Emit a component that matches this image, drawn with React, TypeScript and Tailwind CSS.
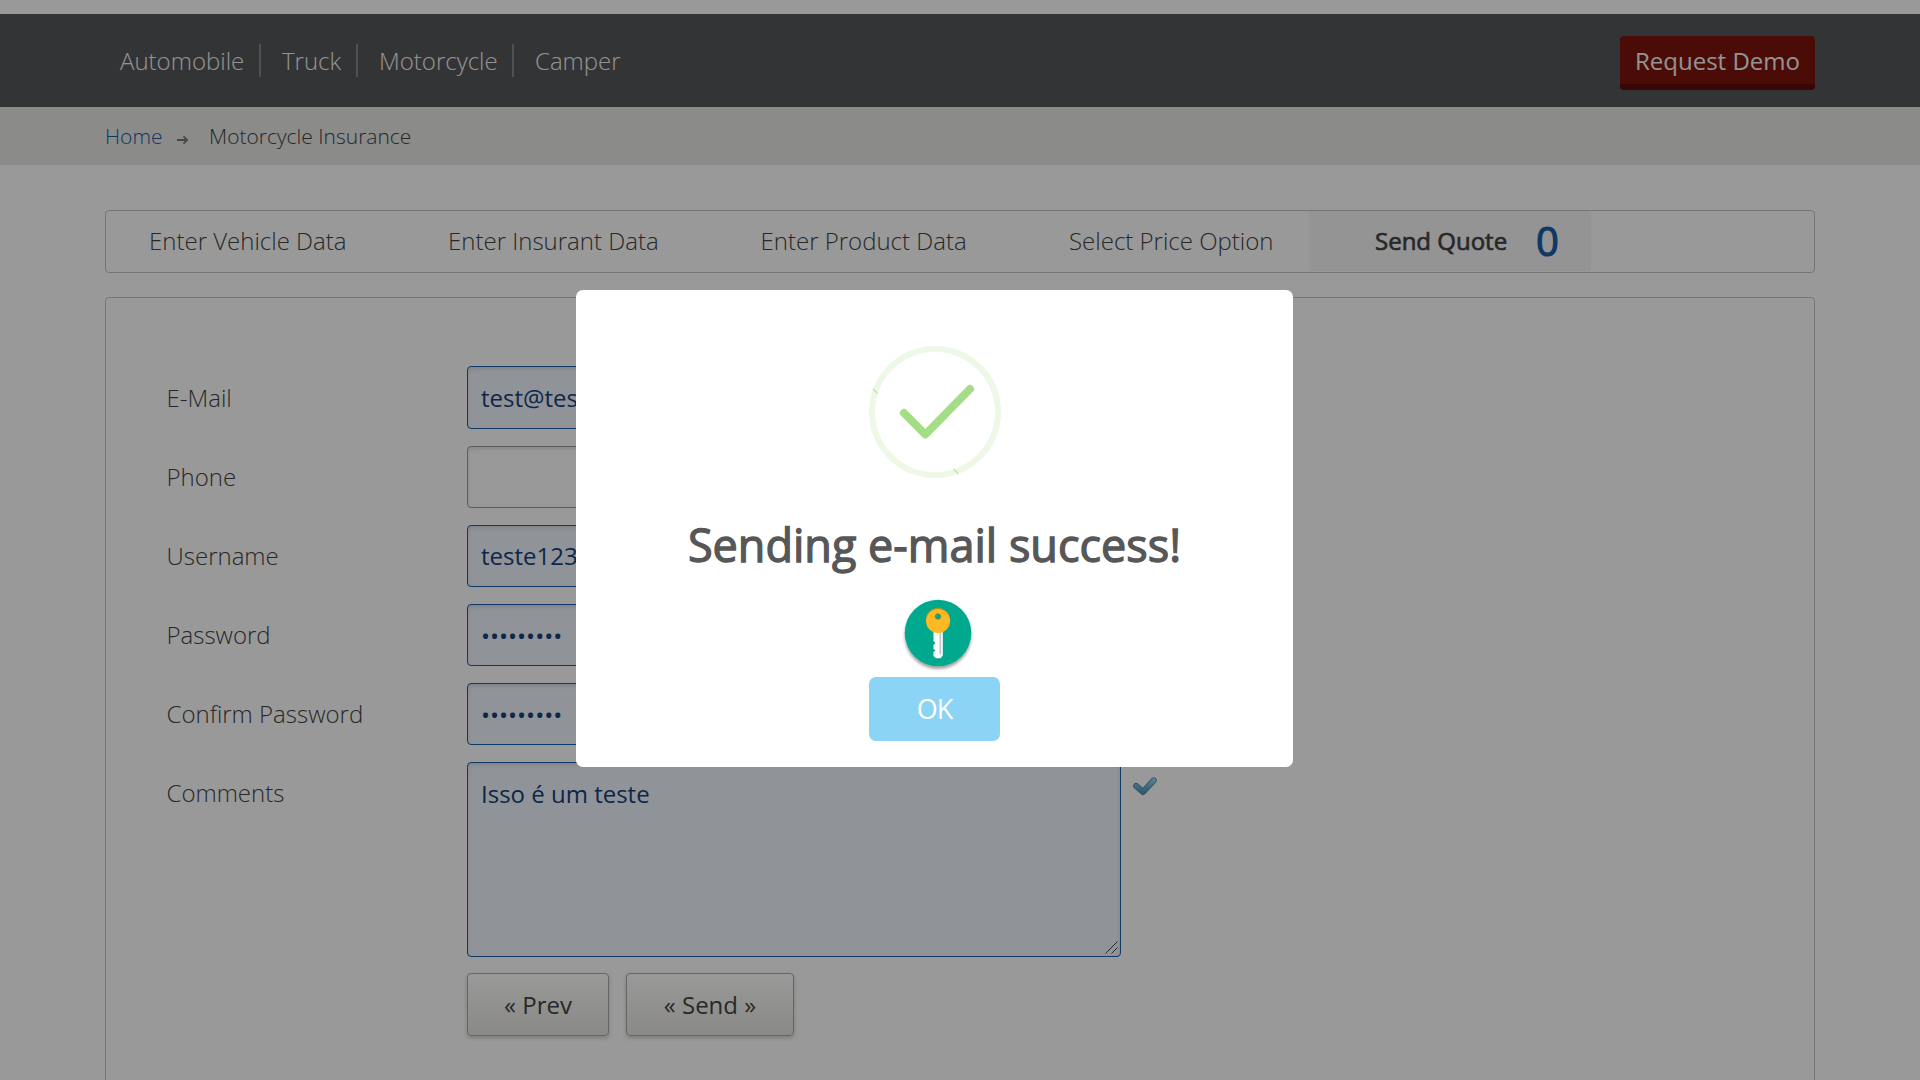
import React from "react";

const steps = [
  { label: "Enter Vehicle Data", cls: "w-[299px] pl-[43px]" },
  { label: "Enter Insurant Data", cls: "w-[312px] pl-[43px]" },
  { label: "Enter Product Data", cls: "w-[308px] pl-[43.5px]" },
  { label: "Select Price Option", cls: "w-[284px] pl-[44px]" },
];

const fields = [
  { label: "E-Mail", value: "test@teste.com", filled: true, h: "h-[63px]", labelLine: "leading-[63px]", line: "leading-[61px]" },
  { label: "Phone", value: "", filled: false, h: "h-[62px]", labelLine: "leading-[61px]", line: "leading-[60px]" },
  { label: "Username", value: "teste123", filled: true, h: "h-[62px]", labelLine: "leading-[61px]", line: "leading-[59px]" },
  { label: "Password", value: "•••••••••", filled: true, h: "h-[62px]", labelLine: "leading-[61px]", line: "leading-[61px]" },
  { label: "Confirm Password", value: "•••••••••", filled: true, h: "h-[62px]", labelLine: "leading-[61px]", line: "leading-[61px]" },
];

const filledBox = "border-[#1a60ad] bg-[#f0f5fd] text-[#17427a]";
const emptyBox = "border-[#9a9a9a] bg-white";

function Header() {
  return (
    <header className="mt-[14px] flex h-[93px] shrink-0 items-center bg-[#555759] pl-[120px] pr-[105px] text-[24px] font-light leading-[33px] text-[#f5f5f5]">
      <nav className="flex flex-1 items-center">
        <a className="w-[141px] border-r-2 border-[#85878a]">Automobile</a>
        <a className="w-[97px] border-r-2 border-[#85878a] pl-[21px]">Truck</a>
        <a className="w-[156px] border-r-2 border-[#85878a] pl-[21px]">Motorcycle</a>
        <a className="pl-[21px]">Camper</a>
      </nav>
      <button className="mt-[22px] h-[54px] w-[195px] self-start rounded-[4px] border-b-[6px] border-[#5e0b08] bg-[#7e130b] pt-px text-center font-normal leading-[47px]">
        Request Demo
      </button>
    </header>
  );
}

function Breadcrumb() {
  return (
    <div className="flex h-[58px] shrink-0 items-center bg-[#e8e8e6] pl-[105px] text-[21px] font-light leading-[28px] text-[#444]">
      <a className="w-[72px] text-[#1c58a8]">Home</a>
      <svg className="mt-[7px] mr-[20px]" width="12" height="10" viewBox="0 0 12 10" fill="none" stroke="#777" strokeWidth="1.8">
        <path d="M0 5H10.5M6.5 1.4L10.2 5L6.5 8.600" />
      </svg>
      <span>Motorcycle Insurance</span>
    </div>
  );
}

function Steps() {
  return (
    <div className="flex h-[63px] rounded-[4px] border border-[#c4c4c4] text-[24px] font-light leading-[59px] text-[#444]">
      {steps.map((s) => (
        <div key={s.label} className={s.cls}>
          {s.label}
        </div>
      ))}
      <div className="flex h-[60px] w-[282px] bg-[#f7f7f7] pl-[66px] font-normal">
        <span className="w-[161px] [-webkit-text-stroke:0.7px_#444]">Send Quote</span>
        <span className="text-[40px] leading-[60px] text-[#1c5eac] [-webkit-text-stroke:1.2px_#1c5eac]">0</span>
      </div>
    </div>
  );
}

function BlueCheck() {
  return (
    <svg className="ml-[12px] mt-[15px] shrink-0" width="24" height="19" viewBox="0 0 24 19" fill="none" strokeLinecap="round" strokeLinejoin="round">
      <defs>
        <linearGradient id="tick" x1="0" y1="0" x2="0" y2="1">
          <stop offset="0" stopColor="#96d0e8" />
          <stop offset="1" stopColor="#4a98bd" />
        </linearGradient>
      </defs>
      <path d="M3.2 9L10 15L20.8 3.4" stroke="#4a8ba8" strokeWidth="6" />
      <path d="M3.2 9L10 15L20.8 3.4" stroke="url(#tick)" strokeWidth="4.4" />
    </svg>
  );
}

function QuoteForm() {
  const button =
    "h-[63px] rounded-[4px] border border-[#aaa] bg-gradient-to-b from-white to-[#e6e5e0] text-center leading-[61px] shadow-[0_2px_4px_rgba(0,0,0,0.2)]";
  return (
    <div className="mt-[24px] h-[900px] rounded-[4px] border border-[#c4c4c4] pl-[61px] pt-[68px] text-[24px] leading-[61px] text-[#444]">
      {fields.map((f) => (
        <div key={f.label} className={`mb-[17px] flex ${f.h}`}>
          <label className={`-ml-[0.5px] w-[300.5px] font-light ${f.labelLine}`}>{f.label}</label>
          <div
            className={`w-[654px] rounded-[4px] border pl-[13px] shadow-[inset_0_2px_4px_rgba(0,0,0,0.12)] ${f.line} ${f.filled ? filledBox : emptyBox}`}
          >
            {f.value}
          </div>
        </div>
      ))}
      <div className="flex h-[195px]">
        <label className="-ml-[0.5px] w-[300.5px] font-light">Comments</label>
        <div className={`flex w-[654px] items-start justify-between rounded-[4px] border pl-[13px] shadow-[inset_0_2px_4px_rgba(0,0,0,0.12)] ${filledBox}`}>
          <span>Isso é um teste</span>
          <svg className="mr-[2px] mb-[2px] self-end" width="13" height="13" viewBox="0 0 13 13" stroke="#444" strokeWidth="1">
            <path d="M0.5 12.5L12.5 0.5M6.5 12.5L12.5 6.5" />
          </svg>
        </div>
        <BlueCheck />
      </div>
      <div className="mt-[16px] flex gap-[17px] pl-[300px]">
        <button className={`w-[142px] ${button}`}>« Prev</button>
        <button className={`w-[168px] ${button}`}>« Send »</button>
      </div>
    </div>
  );
}

function SuccessIcon() {
  return (
    <svg width="132" height="132" viewBox="0 0 132 132" fill="none">
      <circle cx="66" cy="66" r="63" stroke="#edf8e7" strokeWidth="6" />
      <path d="M4 43L8.500 47.500M84.500 123L89.500 128" stroke="#bfe6aa" strokeWidth="1.200" />
      <path d="M35 67L56.300 88.500L101 43" stroke="#a5dc86" strokeWidth="8" strokeLinecap="round" strokeLinejoin="round" />
    </svg>
  );
}

function KeyBadge() {
  return (
    <svg className="ml-[6px] mt-[22px]" width="76" height="77" viewBox="0 0 76 77">
      <defs>
        <filter id="drop" x="-10%" y="-10%" width="120%" height="125%">
          <feDropShadow dx="0" dy="2.5" stdDeviation="1.8" floodOpacity="0.4" />
        </filter>
      </defs>
      <circle cx="38" cy="34" r="33.300" fill="#03a98e" filter="url(#drop)" />
      <path d="M33.500 31H42.800V56.500L40.500 59.300H36L33.500 57V53L35.500 51.500L33.500 50V46L35.500 44L33.500 42Z" fill="#fff" />
      <path d="M39.500 33H41.200V55.500H39.500Z" fill="#c3c6c8" />
      <circle cx="38" cy="21" r="12.200" fill="#a8922a" />
      <circle cx="38" cy="22" r="12" fill="#fdb924" />
      <circle cx="38" cy="17.500" r="2.800" fill="#03a98e" stroke="#8a8420" strokeWidth="0.800" />
    </svg>
  );
}

function SuccessDialog() {
  return (
    <div className="fixed inset-0 bg-black/40">
      <div className="absolute left-[576px] top-[290px] flex h-[477px] w-[717px] flex-col items-center rounded-[7px] bg-white pt-[56px]">
        <SuccessIcon />
        <h2 className="mt-[35px] h-[64px] whitespace-nowrap text-[45px] leading-[64px] text-[#575757] [-webkit-text-stroke:1.3px_#575757]">
          Sending e-mail success!
        </h2>
        <KeyBadge />
        <button className="mt-px h-[64px] w-[131px] rounded-[7px] bg-[#8cd4f5] text-center text-[27px] leading-[62px] tracking-[-1px] text-white">
          OK
        </button>
      </div>
    </div>
  );
}

export default function App() {
  return (
    <div className="flex h-[1080px] w-[1920px] flex-col overflow-hidden bg-white font-['Open_Sans',sans-serif]">
      <Header />
      <Breadcrumb />
      <main className="mx-[105px] mt-[45px]">
        <Steps />
        <QuoteForm />
      </main>
      <SuccessDialog />
    </div>
  );
}
